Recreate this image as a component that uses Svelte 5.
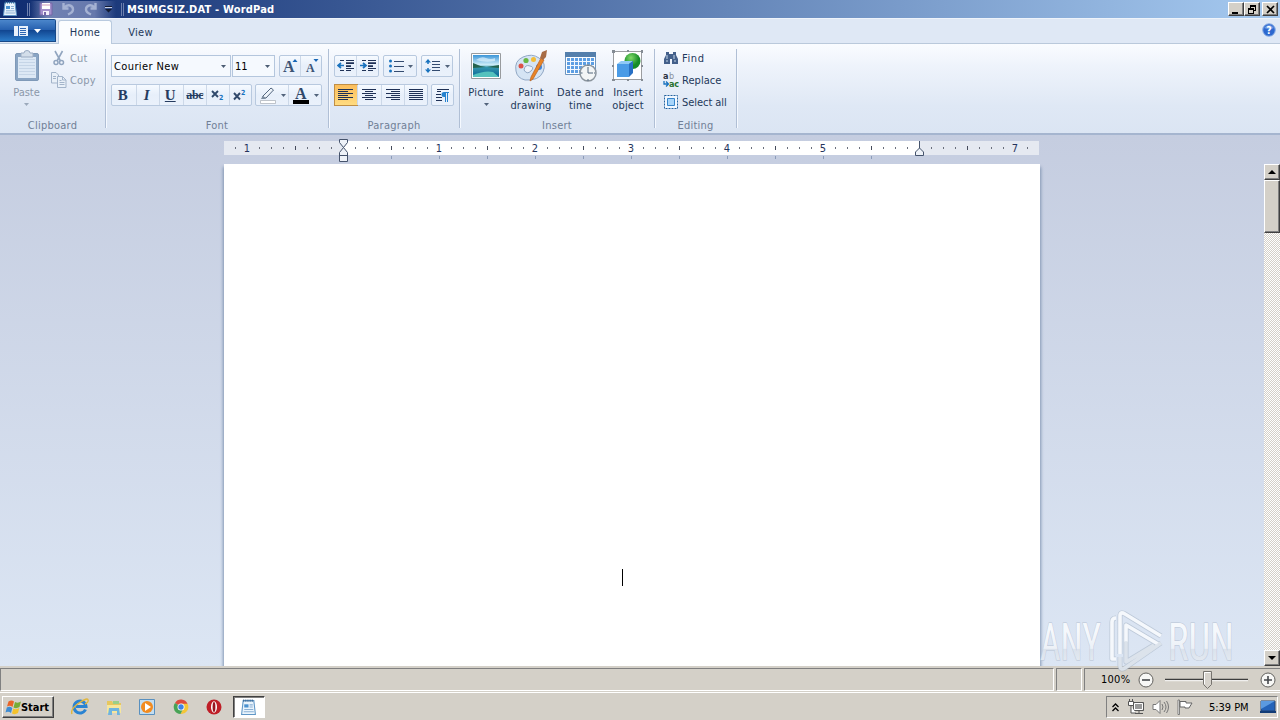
<script>
  const ticks = [];
  for (let x = 235; x < 1035; x += 12) {
    const n = (x - 343) / 12;
    if (n % 8 === 0) continue;
    ticks.push({ x: x - 224, half: n % 4 === 0 });
  }
  const numbers = [[247, '1'], [439, '1'], [535, '2'], [631, '3'], [727, '4'], [823, '5'], [1015, '7']];
  const stops = Array.from({ length: 11 }, (_, i) => 391 + i * 48 - 224);
</script>

{#snippet arrow(cls = '')}
  <svg class="arrow {cls}" width="5" height="3" viewBox="0 0 5 3"><path d="M0 0h5L2.5 3z" fill="currentColor" /></svg>
{/snippet}

{#snippet lines(list)}
  <svg width="16" height="14" viewBox="0 0 16 14" shape-rendering="crispEdges">
    {#each list as [a, b], i}
      <path d="M{a} {i * 2 + 1.5}H{b}" stroke="#1f3156" />
    {/each}
  </svg>
{/snippet}

{#snippet doc(size)}
  <svg width={size} height={size} viewBox="0 0 16 16">
    <path d="M3 1.5h10l1.5 13h-13z" fill="#eaf4fc" stroke="#5f96c6" />
    <path d="M3 1.5h10" stroke="#3a648f" stroke-dasharray="1 1" stroke-width="2" />
    <path d="M4 5h4v3H4z" fill="#4a91cf" /><path d="M9 5.5h3M9 7.5h3M4 9.8h8.5M3.5 12h9.5" stroke="#8bb0d4" />
  </svg>
{/snippet}

<div class="screen">
  <header class="title">
    <div class="appicon">{@render doc(16)}</div>
    <i class="grip"></i>
    <div class="quick">
      <svg width="14" height="14" viewBox="0 0 14 14"><path d="M1 1h12v12H1z" fill="#a48fcb" stroke="#7566a6" /><path d="M3 1h8v6H3z" fill="#fff" /><path d="M3 3h8" stroke="#ce9ab8" /><path d="M4 9h6v4H4z" fill="#f4f0fa" /><path d="M5 10h2v3H5z" fill="#7766a8" /></svg>
      <svg width="15" height="14" viewBox="0 0 15 14"><path d="M2.500 1v5.500h5M3 6q3-3.500 6-2.500t3 4-5 5" fill="none" stroke="#a5b2d3" stroke-width="2.400" /></svg>
      <svg width="15" height="14" viewBox="0 0 15 14"><path d="M12.500 1v5.500h-5M12 6Q9 2.500 6 3.500t-3 4 5 5" fill="none" stroke="#a5b2d3" stroke-width="2.400" /></svg>
      <svg class="custom" width="7" height="7" viewBox="0 0 7 7"><path d="M0 .500h7" stroke="#111a33" /><path d="M0 1.500h7" stroke="#c5cee4" /><path d="M0 3h7L3.500 6.500z" fill="#111a33" /></svg>
    </div>
    <i class="grip second"></i>
    <b class="caption">MSIMGSIZ.DAT - WordPad</b>
    <div class="winbtns">
      <button><svg width="10" height="9" viewBox="0 0 10 9"><path d="M1 7h6v2H1z" /></svg></button>
      <button><svg width="10" height="9" viewBox="0 0 10 9"><path d="M3 0h6v6H7V5h1V2H4v1H3zM1 3h6v6H1zM2 5v3h4V5z" fill-rule="evenodd" /></svg></button>
      <button class="close"><svg width="9" height="9" viewBox="0 0 9 9"><path d="m1 1 7 7M8 1 1 8" stroke="#000" stroke-width="1.7" /></svg></button>
    </div>
  </header>

  <nav class="tabs">
    <button class="file">
      <svg width="14" height="12" viewBox="0 0 14 12"><path d="M0 1h14v10H0z" fill="#e8f1fb" /><path d="M4.500 1v10" stroke="#2d66b2" /><path d="M6 3.500h6M6 5.500h6M6 7.500h6M6 9.500h6" stroke="#2d66b2" /></svg>
      <svg width="7" height="4" viewBox="0 0 7 4"><path d="M0 0h7L3.500 4z" fill="#fff" /></svg>
    </button>
    <span class="tab active">Home</span>
    <span class="tab">View</span>
    <svg class="help" width="14" height="14" viewBox="0 0 14 14"><circle cx="7" cy="7" r="6.300" fill="#2d68cf" stroke="#8eb0e5" /><path d="M2 5Q7-1 12 5Q7 7 2 5" fill="#86aeec" opacity=".7" /><text x="7" y="10.800" text-anchor="middle" font-size="10.500" font-weight="700" fill="#fff">?</text></svg>
  </nav>

  <section class="ribbon">
    <div class="group clip">
      <div class="body disabled">
        <div class="big paste">
          <svg width="28" height="32" viewBox="0 0 28 32"><rect x="2.500" y="3.500" width="23" height="27" rx="1.500" fill="#8aa5c4" stroke="#7f99b8" /><path d="M5 7h18v21H5z" fill="#dce8f5" /><path d="M6 9.500h16M6 12.500h16M6 15.500h16M6 18.500h16M6 21.500h16M6 24.500h16" stroke="#c5d5e7" /><path d="M8 7V3h3q0-2.500 3-2.500T17 3h3v4z" fill="#d3deea" stroke="#9aabc2" /></svg>
          <span>Paste</span>{@render arrow()}
        </div>
        <div class="side">
          <div><svg width="16" height="16" viewBox="0 0 16 16" fill="none" stroke="#91a5bf"><path d="m4 1 5.500 10M11.500 1 6 11" stroke-width="1.600" /><circle cx="5" cy="12.500" r="2" stroke-width="1.500" /><circle cx="10.500" cy="12.500" r="2" stroke-width="1.500" /></svg><span>Cut</span></div>
          <div><svg width="16" height="16" viewBox="0 0 16 16" fill="#e9f0f8" stroke="#a3b4ca"><path d="M.500.500H5L7.500 3v8h-7z" /><path d="M2 4.500h3M2 6.500h3" /><path d="M6.500 4.500h5L15 8v7.500H6.500zM11.500 4.500V8H15" /><path d="M8.500 8.500h2M8.500 10.500h5M8.500 12.500h5" /></svg><span>Copy</span></div>
        </div>
      </div>
      <footer>Clipboard</footer>
    </div>

    <div class="group font">
      <div class="row">
        <div class="combos"><div class="combo face">Courier New{@render arrow()}</div><div class="combo size">11{@render arrow()}</div></div>
        <div class="set w22">
          <button><svg width="17" height="18" viewBox="0 0 17 18"><text x="1" y="15" font-family="Liberation Serif" font-size="16" font-weight="700" fill="#3c5475">A</text><path d="m10.500 5 2.500-3 2.500 3z" fill="#1767b7" /></svg></button>
          <button><svg width="17" height="18" viewBox="0 0 17 18"><text x="3" y="15" font-family="Liberation Serif" font-size="12" font-weight="700" fill="#3c5475">A</text><path d="m10.500 2 2.500 3 2.500-3z" fill="#1767b7" /></svg></button>
        </div>
      </div>
      <div class="row">
        <div class="set styles">
          <button class="ser">B</button><button class="ser it">I</button><button class="ser un">U</button><button class="ser abc">abc</button>
          <button><svg width="16" height="16" viewBox="0 0 16 16"><path d="m2 4 6 6M8 4l-6 6" stroke="#31496b" stroke-width="1.900" /><text x="9" y="13" font-size="7" font-weight="700" fill="#1972be">2</text></svg></button>
          <button><svg width="16" height="16" viewBox="0 0 16 16"><path d="m2 6 6 6.500M8 6l-6 6.500" stroke="#31496b" stroke-width="1.900" /><text x="9" y="7.500" font-size="7" font-weight="700" fill="#1972be">2</text></svg></button>
        </div>
        <div class="set colors">
          <button><svg width="18" height="18" viewBox="0 0 18 18"><path d="m4 10 8-8 2.500 2L7 12l-4 .500z" fill="#eef4fa" stroke="#53667f" /><path d="m4 10 3 2M2 13l2-3 3 2-3 1z" fill="#7e8ea0" /><path d="M1.500 14.500h15v3h-15z" fill="#fff" stroke="#a7adb4" stroke-width=".7" /></svg>{@render arrow()}</button>
          <button><svg width="18" height="18" viewBox="0 0 18 18"><text x="3" y="13" font-family="Liberation Serif" font-size="16" font-weight="700" fill="#31496b">A</text><path d="M1 14h16v4H1z" /></svg>{@render arrow()}</button>
        </div>
      </div>
      <footer>Font</footer>
    </div>

    <div class="group para">
      <div class="row">
        <div class="set w22">
          {#each [0, 1] as dir}
            <button><svg width="18" height="14" viewBox="0 0 18 14"><path d="M3 1.500h4M9 1.500h8M9 4h8M9 7h5M9 9.500h8M3 11.500h4M9 11.500h5" stroke="#1f3156" shape-rendering="crispEdges" /><path d="M9 4h8M9 7h5" stroke="#1f3156" stroke-width="1.500" /><path d={dir ? 'M1 6.500h5M4 4l3 2.500L4 9' : 'M7 6.500H2M4 4 1 6.500 4 9'} fill="none" stroke="#1972be" stroke-width="1.700" /></svg></button>
          {/each}
        </div>
        <div class="set bullets"><button><svg width="16" height="16" viewBox="0 0 16 16"><path d="M6 3.500h10M6 8.500h10M6 13.500h10" stroke="#334b70" shape-rendering="crispEdges" /><g fill="#1972be"><circle cx="2.500" cy="3" r="1.500" /><circle cx="2.500" cy="8" r="1.500" /><circle cx="2.500" cy="13" r="1.500" /></g></svg>{@render arrow()}</button></div>
        <div class="set spacing"><button><svg width="16" height="16" viewBox="0 0 16 16"><path d="M7 3.500h8M7 6.500h8M7 9.500h8M7 12.500h8" stroke="#334b70" shape-rendering="crispEdges" /><path d="M3 2v4M3 10v4" stroke="#1972be" stroke-width="1.500" /><path d="M0 4.500 3 1l3 3.500zM0 11.500 3 15l3-3.500z" fill="#1972be" /></svg>{@render arrow()}</button></div>
      </div>
      <div class="row">
        <div class="set aligns">
          <button class="on">{@render lines([[0, 15], [0, 10], [0, 15], [0, 10], [0, 15], [0, 10]])}</button>
          <button>{@render lines([[1, 15], [4, 12], [1, 15], [4, 12], [1, 15], [4, 12]])}</button>
          <button>{@render lines([[1, 15], [6, 15], [1, 15], [6, 15], [1, 15], [6, 15]])}</button>
          <button>{@render lines([[1, 15], [1, 15], [1, 15], [1, 15], [1, 15], [1, 15]])}</button>
        </div>
        <div class="set pilcrow"><button><svg width="16" height="16" viewBox="0 0 16 16"><path d="M2 2.500h12M2 4.500h4M1 7.500h5M1 10.500h6M1 13.500h6" stroke="#1f3156" shape-rendering="crispEdges" /><path d="M14 5H9q-2.500 0-2.500 2.500T9 10h1v5h1V6h1v9h1V6h1z" fill="#2482cf" /></svg></button></div>
      </div>
      <footer>Paragraph</footer>
    </div>

    <div class="group insert">
      <div class="body">
        <div class="big" style:width="50px">
          <svg width="32" height="32" viewBox="0 0 32 32"><defs><linearGradient id="sky" x2="0" y2="1"><stop stop-color="#3b95d8" /><stop offset=".45" stop-color="#d0eef8" /><stop offset=".55" stop-color="#3597ad" /><stop offset="1" stop-color="#086396" /></linearGradient></defs><path d="M1.500 3.500h29v25h-29z" fill="#fff" stroke="#989b9e" /><path d="M3 5h26v22H3z" fill="url(#sky)" /><path d="M3 13q6 3 13 4l-13 1zM29 15l-12 2 12 1z" fill="#24634e" /><path d="M3 25q12-5 20-3l6 5H3z" fill="#55c2bd" /><path d="M6 10q5-4 10-2t9 0v3q-10 2-19-1" fill="#eefaff" opacity=".6" /></svg>
          <span>Picture</span>{@render arrow()}
        </div>
        <div class="big" style:width="40px">
          <svg width="34" height="32" viewBox="0 0 34 32"><path d="M2 21Q0 11 9 7t16 1q8 5 4 14t-18 8Q3 28 2 21m8-1q3 5 7 1t-1-5q-5-2-6 4" fill="#d5e4f4" stroke="#91a8c5" fill-rule="evenodd" /><circle cx="7" cy="16" r="2.500" fill="#dd5147" /><circle cx="12" cy="10.500" r="2.600" fill="#68b744" /><circle cx="19.500" cy="9.500" r="2.500" fill="#f3bd37" /><circle cx="25" cy="17" r="3" fill="#3e85dc" /><path d="m17 27 10-19 3 2-11 19-3 2z" fill="#e88427" stroke="#b96220" stroke-width=".7" /><path d="m26 8 2-6 5-2-1 7-3 3z" fill="#a76c46" /></svg>
          <span>Paint<br />drawing</span>
        </div>
        <div class="big" style:width="59px">
          <svg width="33" height="32" viewBox="0 0 33 32"><path d="M1.500 2.500h30v22h-30z" fill="#fff" stroke="#6d95bf" /><path d="M1 2h31v5H1z" fill="#547fac" /><path d="M3 8h27v15H3z" fill="#5d9ee3" /><path d="M3 11.500h27M3 15.500h27M3 19.500h27M6.500 8v15M10.500 8v15M14.500 8v15M18.500 8v15M22.500 8v15M26.500 8v15" stroke="#f2f8ff" /><circle cx="24" cy="23" r="8" fill="#f3f5f6" stroke="#8c959e" stroke-width="1.500" /><path d="M24 17v6h5M24 16v-1M24 29v2M16.500 23h2M30 23h1" stroke="#52677d" fill="none" /></svg>
          <span>Date and<br />time</span>
        </div>
        <div class="big" style:width="36px">
          <svg width="32" height="32" viewBox="0 0 32 32"><defs><radialGradient id="ball" cx=".4" cy=".3"><stop stop-color="#83db6a" /><stop offset="1" stop-color="#168c27" /></radialGradient></defs><path d="M1.500 1.500h28v28h-28z" fill="#fff" stroke="#9b9da0" /><path d="M0 0h3v3H0zM15 0h2v2h-2zM29 0h2v3h-2zM0 15h2v2H0zM29 15h2v2h-2zM0 29h3v2H0zM15 29h2v2h-2zM29 29h2v2h-2z" fill="#858c94" /><circle cx="20.500" cy="11" r="8" fill="url(#ball)" /><path d="M5 14h12v13H5z" fill="#4a9be6" /><path d="m5 14 4-3h12l-4 3z" fill="#8fc9f6" /><path d="m17 14 4-3v12l-4 4z" fill="#2870c4" /></svg>
          <span>Insert<br />object</span>
        </div>
      </div>
      <footer>Insert</footer>
    </div>

    <div class="group edit">
      <div class="side">
        <div><svg width="16" height="16" viewBox="0 0 16 16"><path d="M3 2h3v2h4V2h3v3l2 4v5H9V9H7v5H1V9l2-4z" fill="#44608a" /><path d="M4 5v4M11 5v4M3 11h2M11 11h2" stroke="#c3d6ea" /></svg><span class="find">Find</span></div>
        <div><svg width="16" height="16" viewBox="0 0 16 16"><text x="0" y="7" font-size="9" font-weight="700" fill="#2b3444">a</text><text x="6" y="7" font-size="9" fill="#8a929e">b</text><text x="6" y="15" font-size="9" font-weight="700" fill="#26702e" textLength="10">ac</text><path d="M1 9v3h4M3 9.500 5.500 12 3 14.500" fill="none" stroke="#1972be" stroke-width="1.300" /></svg><span>Replace</span></div>
        <div><svg width="16" height="16" viewBox="0 0 16 16"><path d="M1.500 1.500h13v13h-13z" fill="#f2f8ff" stroke="#24629f" stroke-dasharray="2 1" /><path d="M4.500 4.500h7v7h-7z" fill="#a8d5fa" stroke="#3785ca" /></svg><span class="select">Select all</span></div>
      </div>
      <footer>Editing</footer>
    </div>
  </section>

  <main class="work">
    <div class="canvas">
      <svg class="ruler" width="816" height="29" viewBox="0 0 816 29" shape-rendering="crispEdges">
        <path d="M0 6h815v14H0z" fill="#e5e9f1" /><path d="M120 6h576v14H120z" fill="#fff" />
        {#each ticks as t}<path d="M{t.x + 0.5} {t.half ? 11 : 12}v{t.half ? 4 : 2}" stroke={t.half ? '#454b5b' : '#6a6f7c'} />{/each}
        {#each numbers as [x, n]}<text x={x - 224} y="17" text-anchor="middle" fill="#25345c">{n}</text>{/each}
        {#each stops as x}<path d="M{x + 0.5} 21v3" stroke="#8c9cb9" />{/each}
        <path d="M115.500 4.500h8v3l-4 5 4 5v9h-8v-9l4-5-4-5zM115.500 20.500h8" fill="#eef2f8" stroke="#45536c" shape-rendering="auto" />
        <path d="M695.500 6v7l4 4v3.500h-8V17l4-4" fill="#eef2f8" stroke="#45536c" shape-rendering="auto" />
      </svg>
      <div class="paper"><i class="caret"></i></div>
    </div>
    <div class="scroll">
      <button><svg width="8" height="4" viewBox="0 0 8 4"><path d="M0 4h8L4 0z" /></svg></button>
      <button class="thumb" aria-label="scroll"></button>
      <span></span>
      <button><svg width="8" height="4" viewBox="0 0 8 4"><path d="M0 0h8L4 4z" /></svg></button>
    </div>
  </main>

  <div class="status">
    <div class="pane first"></div><div class="pane mid"></div>
    <div class="pane zoom">
      <span>100%</span>
      <svg width="16" height="16" viewBox="0 0 16 16"><circle cx="8" cy="8" r="7" fill="#f7f7f5" stroke="#62615e" /><path d="M4 8h8" stroke="#45484c" stroke-width="1.600" /></svg>
      <svg class="slider" width="84" height="22" viewBox="0 0 84 22"><path d="M0 10.500h83" stroke="#3d3d3d" stroke-width="1.400" /><path d="M0 11.700h83" stroke="#fff" /><path d="M38.500 2.500h8v13l-4 4-4-4z" fill="#d7d3cc" stroke="#77746f" /><path d="M39.500 15V3.500h6" stroke="#fff" fill="none" /></svg>
      <svg width="16" height="16" viewBox="0 0 16 16"><circle cx="8" cy="8" r="7" fill="#f7f7f5" stroke="#62615e" /><path d="M4 8h8M8 4v8" stroke="#45484c" stroke-width="1.600" /></svg>
    </div>
  </div>

  <footer class="taskbar">
    <button class="start"><svg width="17" height="16" viewBox="0 0 17 16"><path d="M3.500 2.500q3-2 5.500 0L7.500 8Q5 6 2 7.500z" fill="#e96428" /><path d="M10 3q3 1.500 6-.500L14.500 8q-3 2-6 .500z" fill="#77ac36" /><path d="M1.800 8.500q3-1.500 5.500.500L6 14q-2.500-2-5.500-.500z" fill="#3e8cd3" /><path d="M8.300 9.500q3 1.500 6-.500L13 14q-3 2-6 .500z" fill="#f4c22b" /></svg><b>Start</b></button>
    <div class="apps">
      <svg width="18" height="18" viewBox="0 0 18 18"><path d="M14.500 11.500A6 6 0 1 1 15 8.500H5" fill="none" stroke="#2a83d2" stroke-width="3" /><path d="M1 16Q-1 11 8 5t9-3q1 2-3 4" fill="none" stroke="#e2b63b" stroke-width="1.400" /></svg>
      <svg width="18" height="18" viewBox="0 0 18 18"><path d="M2 3h5l1 2h8v10H2z" fill="#e7c75e" /><path d="M2 7h14v8H2z" fill="#f7e69c" /><path d="M4 10h10l1 7h-3v-4H7v4H3z" fill="#6fb4df" /><path d="M8 3h6v3H8z" fill="#9bcf88" /></svg>
      <svg width="18" height="18" viewBox="0 0 18 18"><path d="M1.500 1.500h15v15h-15z" fill="#c3ddf0" stroke="#5990bf" /><circle cx="9" cy="9" r="6" fill="#f28b20" /><path d="m7 5 6 4-6 4z" fill="#fff" /></svg>
      <svg width="18" height="18" viewBox="0 0 18 18"><path d="M9 9 3 5a7 7 0 0 1 12.500 1z" fill="#de4b3e" /><path d="M9 5.800h6.500A7 7 0 0 1 8.500 16L12 9z" fill="#f4c638" /><path d="m9 9 2 2-2.500 5A7 7 0 0 1 3 5z" fill="#48a356" /><circle cx="9" cy="9" r="3.500" fill="#fff" /><circle cx="9" cy="9" r="2.700" fill="#3f83e5" /></svg>
      <svg width="18" height="18" viewBox="0 0 18 18"><circle cx="9" cy="9" r="7.500" fill="#bf1e27" /><ellipse cx="9" cy="9" rx="3" ry="5.800" fill="#fff" /><ellipse cx="9" cy="9" rx="1.400" ry="5" fill="#98151f" /></svg>
      <div class="task">{@render doc(17)}</div>
    </div>
    <div class="tray">
      <svg width="7" height="9" viewBox="0 0 7 9"><path d="m.500 4 3-3 3 3M.500 8l3-3 3 3" fill="none" stroke="#000" stroke-width="1.300" /></svg>
      <svg width="16" height="16" viewBox="0 0 16 16"><path d="M5.500 3.500h10v8h-10z" fill="#999" stroke="#555" /><path d="M6.500 4.500h8v6h-8z" fill="none" stroke="#fff" /><path d="M7 14.500h8M11 12v2" stroke="#555" /><path d="M.500 2.500h5v4h-5zM1.500 0v3M4.500 0v3M3 7v7h5" fill="#fff" stroke="#555" /></svg>
      <svg width="17" height="16" viewBox="0 0 17 16"><path d="M1 5.500h3l4-4v13l-4-4H1z" fill="#fff" stroke="#777" /><path d="M10 5q2 3 0 6M12 3q4 5 0 10M14.500 2q4 6 0 12" fill="none" stroke="#777" /></svg>
      <svg width="16" height="16" viewBox="0 0 16 16"><path d="M1 1h1.500v14.500H1z" fill="#fff" stroke="#666" stroke-width=".8" /><path d="M3 2.500h6V4h6l-3 5H8V8H3z" fill="#fff" stroke="#666" /></svg>
      <time>5:39 PM</time>
      <svg width="16" height="14" viewBox="0 0 16 14"><path d="M1 1h14v10H1z" fill="#2463b9" stroke="#26446e" /><path d="M1 1h14L1 9z" fill="#5b9ae0" /><path d="M0 11h16v2H0z" fill="#123c76" /></svg>
    </div>
  </footer>

  <svg class="mark" width="210" height="70" viewBox="0 0 210 70">
    <defs><linearGradient id="fade" x2="0" y2="1"><stop offset=".3" stop-color="#f5f8fc" /><stop offset=".6" stop-color="#edf1f7" /><stop offset=".61" stop-color="#dbe2ec" /><stop offset="1" stop-color="#eaeff5" /></linearGradient></defs>
    <g fill="url(#fade)" stroke="#b8c3d3" stroke-width="1" paint-order="stroke">
      <text x="1" y="53" font-size="51" textLength="61" lengthAdjust="spacingAndGlyphs">ANY</text>
      <text x="129" y="53" font-size="51" textLength="66" lengthAdjust="spacingAndGlyphs">RUN</text>
    </g>
    <g fill="none" stroke-linejoin="round">
      <path d="M77 11q-4 0-4 4v37h4M87 35V18l32 19M81 47V9q0-5 5-2l36 22M87 34v21l28-17M81 50v8q0 6 5 3l36-25" stroke="#a9b5c6" stroke-width="5" opacity=".6" />
      <path d="M77 11q-4 0-4 4v37h4M87 35V18l32 19M81 47V9q0-5 5-2l36 22" stroke="#f5f8fc" stroke-width="3.600" />
      <path d="M87 34v21l28-17M81 50v8q0 6 5 3l36-25" stroke="#dfe5ed" stroke-width="3.600" opacity=".9" />
    </g>
  </svg>
</div>

<style>
  :global(body) { margin: 0; overflow: hidden; }
  * { box-sizing: border-box; }
  .screen { position: relative; width: 1280px; height: 720px; display: flex; flex-direction: column; font: 11px/13px "DejaVu Sans Condensed", "DejaVu Sans", sans-serif; font-stretch: condensed; letter-spacing: .05px; color: #1e395b; background: #d4d0c8; overflow: hidden; }
  svg { flex: none; display: block; }
  button { font: inherit; letter-spacing: inherit; color: inherit; border: 0; padding: 0; background: none; display: flex; align-items: center; justify-content: center; }
  .title { height: 18px; flex: none; display: flex; align-items: center; background: linear-gradient(90deg, #0f2c70, #a6caf0); padding-left: 2px; }
  .appicon { width: 25px; }
  .grip { width: 3px; height: 13px; border: solid #6d80ae; border-width: 0 1px; }
  .grip.second { margin-left: 5px; }
  .quick { display: flex; align-items: center; gap: 8px; padding-left: 9px; height: 17px; background: linear-gradient(90deg, transparent, #7182b3 20%, #6678ac 75%, transparent); width: 86px; }
  .quick svg:nth-child(3) { margin-left: -1px; }
  .custom { margin-left: -1px; }
  .caption { color: #fff; padding-left: 3px; letter-spacing: .19px; }
  .winbtns { margin: 0 2px 0 auto; display: flex; }
  .winbtns button, .scroll button { background: #d4d0c8; border: 1px solid; border-color: #fff #404040 #404040 #fff; box-shadow: inset -1px -1px #808080; }
  .winbtns button { width: 16px; height: 14px; }
  .winbtns .close { margin-left: 2px; }
  .tabs { height: 26px; flex: none; display: flex; align-items: flex-end; background: #dfe8f5; border-bottom: 1px solid #bac9db; border-top: 1px solid #eef3fa; }
  .file { width: 56px; height: 23px; gap: 6px; margin-bottom: 1px; align-self: flex-end; background: linear-gradient(#4b86cb, #255fae 48%, #124792 50%, #2b7bc8); border: 1px solid #174988; border-left: 0; border-radius: 0 2px 0 0; }
  .tab { width: 57px; height: 22px; display: flex; align-items: center; justify-content: center; letter-spacing: .3px; }
  .active { margin: 0 0 -1px 2px; height: 24px; width: 54px; background: #fbfdff; border: 1px solid #b9cadf; border-bottom: 0; border-radius: 3px 3px 0 0; }
  .help { margin: 0 4px 6px auto; }
  .ribbon { height: 91px; flex: none; display: flex; background: linear-gradient(#fafcff, #eef3fb 25%, #dfe8f5 70%, #dbe5f3); border-bottom: 2px solid #a5b5cf; padding-top: 5px; }
  .group { height: 79px; border-right: 1px solid #b0bfd5; box-shadow: 1px 0 #f5f9ff; display: flex; flex-direction: column; }
  .group > footer { margin: auto 0 -2px; text-align: center; color: #707f96; height: 10px; display: flex; align-items: center; justify-content: center; letter-spacing: .25px; }
  .clip { width: 106px; } .font { width: 223px; padding-left: 5px; } .para { width: 131px; padding-left: 5px; } .insert { width: 195px; } .edit { width: 82px; }
  .group.font footer, .group.para footer { margin-left: -5px; }
  .body { display: flex; height: 67px; }
  .disabled { color: #8b98aa; }
  .disabled .arrow { color: #9ba9bb; }
  .big { display: flex; flex-direction: column; align-items: center; text-align: center; padding-top: 1px; white-space: nowrap; letter-spacing: .2px; }
  .big span { margin-top: 4px; }
  .big .arrow { margin-top: 4px; }
  .paste { width: 53px; letter-spacing: 0; }
  .side { display: flex; flex-direction: column; gap: 6px; padding-top: 1px; }
  .side > div { display: flex; align-items: center; gap: 3px; height: 16px; white-space: nowrap; }
  .clip .side { margin-left: -2px; letter-spacing: .2px; }
  .edit .side { padding-left: 8px; }
  .find { letter-spacing: .6px; } .select { letter-spacing: -.05px; }
  .insert .body { padding-left: 1px; }
  .row { display: flex; gap: 4px; height: 22px; margin-top: 6px; }
  .row + .row { margin-top: 7px; }
  .combos { display: flex; gap: 1px; }
  .combo { height: 22px; display: flex; align-items: center; justify-content: space-between; color: #000; border: 1px solid #b4c6dd; background: #f5f9fe; padding: 0 4px 0 2px; letter-spacing: .38px; white-space: nowrap; }
  .combo .arrow { color: #4b5c73; }
  .face { width: 120px; } .size { width: 43px; letter-spacing: 0; }
  .arrow { color: #52637b; }
  .set { height: 22px; display: flex; border: 1px solid #b8c9df; border-radius: 2px; background: linear-gradient(#f6faff, #e7effa 50%, #eaf1fb); }
  .set button { flex: 1; gap: 4px; }
  .set button + button { border-left: 1px solid #ccd8e8; }
  .w22 { width: 45px; } .styles { width: 141px; margin-right: -1px; } .colors { width: 67px; }
  .font .w22 { width: 43px; }
  .bullets { width: 34px; } .spacing { width: 32px; } .aligns { width: 94px; margin-right: -1px; } .pilcrow { width: 23px; }
  .set .ser { font: bold 15px "Liberation Serif", serif; letter-spacing: 0; color: #263c60; padding-right: 2px; flex: 0 0 23.500px; }
  .it { font-style: italic !important; } .un { text-decoration: underline; }
  .set .abc { font-size: 12px; text-decoration: line-through; padding-right: 0; letter-spacing: -.4px; }
  .set .on { background: linear-gradient(#fbbd5b, #ffdb80); box-shadow: 0 0 0 1px #bf8e46; }
  .work { height: 531px; flex: none; display: flex; background: linear-gradient(#c5cde0, #dce6f4); }
  .canvas { width: 1264px; padding-left: 224px; }
  .ruler { letter-spacing: 0; }
  .paper { width: 816px; height: 502px; background: #fff; box-shadow: 0 4px 3px 1px #8296b2; clip-path: inset(0 -6px 0 -6px); padding: 405px 0 0 398px; }
  .caret { display: block; width: 1px; height: 17px; background: #000; }
  .scroll { width: 16px; padding-top: 29px; display: flex; flex-direction: column; }
  .scroll span { flex: 1; background: repeating-conic-gradient(#fff 0 25%, #d4d0c8 0 50%) 0 0 / 2px 2px; }
  .scroll button { height: 16px; flex: none; }
  .scroll .thumb { height: 53px; }
  .status { height: 26px; flex: none; display: flex; gap: 2px; padding-top: 2px; color: #000; }
  .pane { height: 23px; border: 1px solid; border-color: #808080 #fff #fff #808080; }
  .first { width: 1054px; } .mid { width: 26px; }
  .zoom { flex: 1; border-right: 0; display: flex; align-items: center; padding-left: 16px; }
  .zoom span { width: 37px; letter-spacing: .25px; }
  .slider { margin: 0 11px 0 11px; }
  .taskbar { height: 28px; flex: none; border-top: 1px solid #fff; display: flex; align-items: center; padding: 1px 2px 0; color: #000; }
  .start { width: 52px; height: 22px; background: #d4d0c8; border: 1px solid; border-color: #fff #404040 #404040 #fff; box-shadow: inset -1px -1px #808080; padding-right: 2px; }
  .start b { letter-spacing: 0; margin-left: -1px; }
  .apps { display: flex; align-items: center; gap: 15.500px; margin-left: 17px; }
  .task { width: 32px; height: 22px; margin-left: -6px; background: #fff; border: 1px solid; border-color: #404040 #fff #fff #404040; box-shadow: inset 1px 1px #808080; display: flex; align-items: center; justify-content: center; }
  .tray { margin-left: auto; width: 172px; height: 22px; border: 1px solid; border-color: #808080 #fff #fff #808080; display: flex; align-items: center; padding-left: 5px; gap: 8px; }
  .tray svg:first-child { margin-right: 1px; }
  time { width: 41px; margin: 0 2px 0 8px; white-space: nowrap; letter-spacing: -.04px; }
  .mark { position: absolute; left: 1039px; top: 607px; font-family: Roboto, sans-serif; font-weight: 400; letter-spacing: 0; overflow: visible; pointer-events: none; }
</style>
